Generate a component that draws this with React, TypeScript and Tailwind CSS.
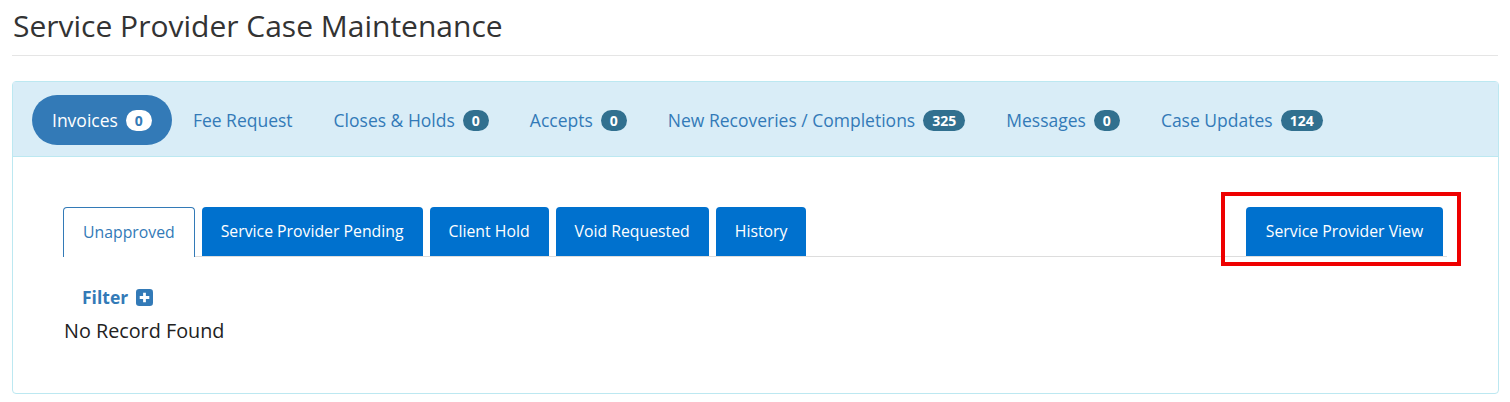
import React from "react";

const pills = [
    { label: "Invoices", count: "0", active: true },
    { label: "Fee Request" },
    { label: "Closes & Holds", count: "0" },
    { label: "Accepts", count: "0" },
    { label: "New Recoveries / Completions", count: "325" },
    { label: "Messages", count: "0" },
    { label: "Case Updates", count: "124" },
];

const tabs = ["Unapproved", "Service Provider Pending", "Client Hold", "Void Requested", "History"];

export default function App() {
    return (
        <div className="min-h-screen bg-white px-3 pt-[6px] text-[#333] font-['Open_Sans',sans-serif]">
            <h1 className="text-[30px] leading-[40px] pl-px pb-[9px] border-b border-[#e5e5e5]">Service Provider Case Maintenance</h1>

            <div className="mt-[25px] border border-[#bce8f1] rounded-[4px] w-[1487px]">
                {/* pills header */}
                <div className="bg-[#d9edf7] border-b border-[#bce8f1] pl-[19px] pt-[13px] pb-[11px] flex gap-px">
                    {pills.map((p) => (
                        <a
                            key={p.label}
                            className={`h-[50px] px-5 flex items-center gap-2 rounded-full text-[17.5px] ${p.active ? "bg-[#337ab7] text-white" : "text-[#337ab7]"}`}
                        >
                            {p.label}
                            {p.count && (
                                <span className={`rounded-full px-[9px] h-[21px] flex items-center text-[14px] font-bold ${p.active ? "bg-white text-[#337ab7]" : "bg-[#31708f] text-white"}`}>
                                    {p.count}
                                </span>
                            )}
                        </a>
                    ))}
                </div>

                {/* body */}
                <div className="pl-[50px] pr-[51px] pt-[50px] pb-[47px]">
                    <div className="flex items-end justify-between border-b border-[#ddd]">
                        <div className="flex gap-[7px]">
                            {tabs.map((t, i) => (
                                <button
                                    key={t}
                                    className={`h-[49px] px-[19px] rounded-t-[4px] text-[15.8px] ${i === 0 ? "bg-white text-[#337ab7] border border-b-0 border-[#337ab7] -mb-px h-[50px]" : "bg-[#0071ce] text-white"}`}
                                >
                                    {t}
                                </button>
                            ))}
                        </div>
                        <div className="relative mr-[4px]">
                            <button className="h-[49px] w-[197px] rounded-t-[4px] bg-[#0071ce] text-white text-[15.8px]">Service Provider View</button>
                            <span className="absolute -left-[25px] -right-[18px] -top-[15px] -bottom-[10px] border-4 border-[#e00] pointer-events-none" />
                        </div>
                    </div>

                    <div className="pl-[19px] pt-[27px] flex items-center gap-[8px]">
                        <span className="text-[#337ab7] font-bold text-[17.5px]">Filter</span>
                        <svg width="17" height="17" viewBox="0 0 16 16">
                            <rect x="0" y="0" width="16" height="16" rx="3" fill="#337ab7" />
                            <path d="M8 3.5v9M3.5 8h9" stroke="white" strokeWidth="2.6" />
                        </svg>
                    </div>
                    <div className="pl-px pt-[6px] text-[19.8px] text-[#222]">No Record Found</div>
                </div>
            </div>
        </div>
    );
}
